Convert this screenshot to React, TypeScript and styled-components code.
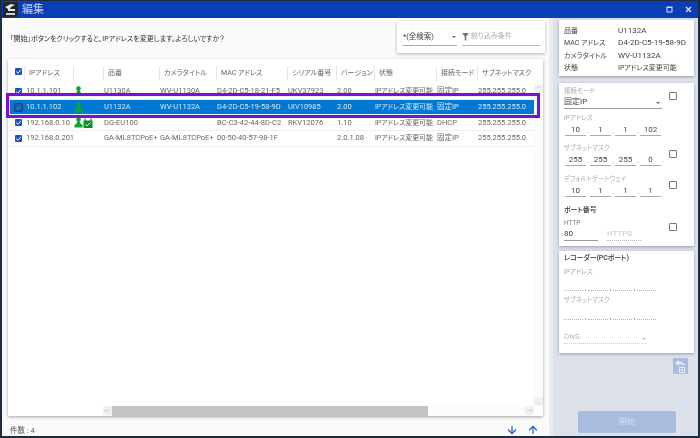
import React from "react";
import styled, { createGlobalStyle } from "styled-components";
import { ArrowDown, ArrowUp } from "lucide-react";

const Global = createGlobalStyle`
  html, body { margin: 0; padding: 0; width: 700px; height: 438px; overflow: hidden; background: #263446; }
  body { font-family: Roboto, "Noto Sans CJK JP", sans-serif; font-feature-settings: "palt" 1; }
  * { box-sizing: border-box; }
  #root { filter: blur(0.35px); }
`;

const Windowed = styled.div`
  position: relative; width: 700px; height: 438px; padding: 1px 2px 2px 2px;
  display: flex; flex-direction: column; background: #1d2c40;
`;
const TitleBar = styled.header`
  height: 17px; flex: none; background: #0a3eb6; display: flex; align-items: center; padding: 0 6px 0 1px;
`;
const TitleText = styled.span`
  font-size: 11px; color: #c4d2f0; margin-left: 4px; flex: 1; line-height: 17px;
`;
const WinButtons = styled.div`display: flex; align-items: center; gap: 12px;`;
const Body = styled.div`flex: 1; display: flex; min-height: 0; background: #fafafa;`;
const Main = styled.main`
  width: 547px; flex: none; display: flex; flex-direction: column; background: #fafafa; padding: 2px 4px 0 6px;
`;
const TopRow = styled.div`height: 39px; flex: none; display: flex; justify-content: space-between; align-items: flex-start;`;
const Message = styled.p`margin: 13px 0 0 2px; font-size: 7px; line-height: 12px; color: #333;`;
const SearchCard = styled.div`
  width: 148px; height: 32px; margin-top: 1px; background: #fff; box-shadow: 0 1px 3px rgba(0,0,0,.3);
  display: flex; gap: 5px; padding: 9px 5px 0 6px;
`;
const SearchSelect = styled.div`
  width: 54px; height: 16px; border-bottom: 1px solid #aaa; display: flex; justify-content: space-between;
  font-size: 7.5px; line-height: 14px; color: #444; padding-right: 1px;
`;
const Caret = styled.i<{ $light?: boolean }>`
  width: 0; height: 0; border: 2px solid transparent; border-top: 2.5px solid ${p => (p.$light ? "#bbb" : "#666")};
  border-bottom: 0; margin-top: 6px; display: block;
`;
const FilterField = styled.div`
  flex: 1; height: 16px; border-bottom: 1px solid #bbb; display: flex; gap: 2px; font-size: 7px; line-height: 13px; color: #aaa;
`;
const TableCard = styled.section`
  height: 357px; flex: none; background: #fff; box-shadow: 0 1px 3px rgba(0,0,0,.35); display: flex; flex-direction: column; width: 535px;
`;
const TableTop = styled.div`flex: 1; display: flex; min-height: 0;`;
const Table = styled.div`width: 526px; flex: none;`;
const COLS = "16px 49px 30px 56px 57px 71px 49px 38px 62px 41px 57px";
const HeadRow = styled.div`
  display: grid; grid-template-columns: ${COLS}; height: 25px; padding-top: 3px; align-items: center; font-size: 7px; color: #666;
`;
const HeadCell = styled.div`
  height: 15px; line-height: 14px; padding-left: 4px; border-left: 1px solid #e6e6e6; white-space: nowrap; overflow: hidden;
  &:first-child { border-left: 0; padding: 2px 0 0 7px; overflow: visible; }
`;
const Row = styled.div<{ $selected?: boolean }>`
  display: grid; grid-template-columns: ${COLS}; height: 15.7px; align-items: center; font-size: 7.5px;
  color: ${p => (p.$selected ? "#d4e8f8" : "#666")};
  background: ${p => (p.$selected ? "#0078d4" : "#fff")};
  border-bottom: 1px solid ${p => (p.$selected ? "#0078d4" : "#eee")};
`;
const Cell = styled.div`
  padding-left: 1px; white-space: nowrap; overflow: visible; line-height: 14px;
  &:first-child { padding-left: 7px; }
  &:nth-child(2) { padding-left: 2px; }
`;
const StateCell = styled(Cell)`font-size: 7px; letter-spacing: -0.1px;`;
const IconCell = styled.div`display: flex; padding-left: 1px; align-items: center; gap: 0;`;
const Check = styled.span<{ $selected?: boolean }>`
  display: flex; width: 7px; height: 7px; border-radius: 1px; background: ${p => (p.$selected ? "#0a5fb0" : "#1b54c0")};
  outline: ${p => (p.$selected ? "1px solid #123f66" : "none")}; align-items: center; justify-content: center;
`;
const VScroll = styled.div`
  width: 9px; flex: none; margin-top: 25px; background: #fbfbfb; display: flex; flex-direction: column; justify-content: space-between; align-items: center;
  font-size: 6px; color: #ccc;
`;
const ScrollEnd = styled.span`
  width: 9px; height: 9px; background: #f1f1f1; display: flex; align-items: center; justify-content: center; font-size: 6px; color: #c4c4c4;
`;
const HScroll = styled.div`height: 10px; flex: none; margin-left: 95px; width: 431px; background: #fbfbfb; display: flex;`;
const Thumb = styled.div`width: 316px; background: #c4c4c4;`;
const Spacer = styled.span`flex: 1;`;
const Footer = styled.footer`
  flex: 1; display: flex; align-items: center; justify-content: space-between; font-size: 7.5px; color: #555; padding: 7px 6px 0 2px;
`;
const Arrows = styled.div`display: flex; gap: 9px; color: #1c5fd0;`;
const Highlight = styled.div`
  position: absolute; left: 6px; top: 93px; width: 534px; height: 25px; border: 3px solid #7a0fd8; outline: 1px solid #e8f2fb; outline-offset: -4px; pointer-events: none;
`;
const Side = styled.aside`
  flex: 1; background: #dde1e9; border-left: 4px solid #e9ebee; display: flex; flex-direction: column; padding: 2px 4px 0 6px; align-items: stretch;
`;
const InfoCard = styled.div`
  background: #fff; box-shadow: 0 1px 3px rgba(0,0,0,.3); height: 56px; padding: 5px 0 0 5px; display: grid; grid-template-columns: 54px 1fr;
  grid-auto-rows: 12.4px; font-size: 8px; line-height: 12.4px; color: #444;
`;
const InfoJp = styled.span`font-size: 7px;`;
const Card = styled.div<{ $h: number; $top: number }>`
  background: #fff; box-shadow: 0 1px 3px rgba(0,0,0,.3); height: ${p => p.$h}px; margin-top: ${p => p.$top}px; padding: 0 0 0 5px; display: flex; flex-direction: column;
`;
const FieldRow = styled.div<{ $h: number; $pt?: number }>`
  height: ${p => p.$h}px; padding-top: ${p => p.$pt ?? 0}px; flex: none; display: flex; align-items: flex-start;
`;
const FieldMain = styled.div`width: 100px; flex: none;`;
const Small = styled.div<{ $mt?: number; $dark?: boolean }>`
  font-size: 6.5px; line-height: 9px; color: ${p => (p.$dark ? "#777" : "#aaa")}; white-space: nowrap; margin-top: ${p => p.$mt ?? 0}px;
`;
const SelectValue = styled.div`
  width: 98px; height: 13px; border-bottom: 1px solid #999; font-size: 8px; line-height: 11px; color: #444; display: flex; justify-content: space-between;
  padding-right: 2px;
`;
const Box = styled.span<{ $top: number }>`
  width: 8px; height: 8px; border: 1px solid #777; border-radius: 1px; margin-left: 5px; margin-top: ${p => p.$top}px; flex: none;
`;
const Octets = styled.div`display: flex; gap: 4px; padding-left: 1px; margin-top: 2px;`;
const Octet = styled.span<{ $dot?: boolean }>`
  width: 21px; height: 11px; text-align: center; font-size: 8px; line-height: 10px; color: #444; border-bottom: 1px solid #aaa; position: relative;
  ${p => p.$dot && `&::after { content: "."; position: absolute; right: -3.5px; top: 1px; color: #888; font-size: 7px; }`}
`;
const SectionTitle = styled.div<{ $mt?: number; $mb?: number }>`
  font-size: 7px; line-height: 12px; color: #333; font-weight: 500; white-space: nowrap; letter-spacing: -0.1px;
  margin-top: ${p => p.$mt ?? 0}px; margin-bottom: ${p => p.$mb ?? 0}px;
`;
const PortRow = styled.div`display: flex; gap: 9px; align-items: flex-end; margin-top: 1px;`;
const Port = styled.div<{ $off?: boolean }>`
  width: 34px; height: 12px; font-size: 8px; line-height: 10px; color: ${p => (p.$off ? "#c4c4c4" : "#444")};
  border-bottom: 1px ${p => (p.$off ? "dotted #bbb" : "solid #999")};
`;
const DottedRow = styled.div<{ $mt: number }>`
  width: 92px; margin-top: ${p => p.$mt}px; display: flex; gap: 2px; align-items: flex-end; height: 2px;
`;
const DotSegment = styled.span`flex: 1; border-bottom: 1px dotted #b4b4b4; height: 1px;`;
const DotMark = styled.span`width: 1px; height: 2px; background: #aaa;`;
const DnsRow = styled.div`
  width: 82px; height: 12px; margin-top: 12px; border-bottom: 1px dotted #ccc; font-size: 8px; line-height: 10px; color: #bbb; display: flex; justify-content: space-between;
`;
const ResetRow = styled.div`display: flex; justify-content: flex-end; padding: 5px 6px 0 0;`;
const ResetButton = styled.span`
  width: 15px; height: 16px; background: #a9bcdd; border-radius: 1px; display: flex; align-items: center; justify-content: center;
`;
const Start = styled.div`
  width: 98px; height: 22px; margin: 37px 0 0 19px; background: #a9bcdd; border-radius: 2px; color: #d3dcee; font-size: 8px; text-align: center; line-height: 22px;
`;

const CheckMark = ({ color = "#fff" }: { color?: string }) => (
  <svg width="7" height="7" viewBox="0 0 7 7"><path d="M1.2 3.6 L2.9 5.2 L5.9 1.8" fill="none" stroke={color} strokeWidth="1" /></svg>
);
const Person = () => (
  <svg width="9" height="11" viewBox="0 0 9 11">
    <circle cx="4.5" cy="2.6" r="2.3" fill="#0ca62c" />
    <path d="M3 4.6 L6 4.6 L6.4 6.6 L8.6 8 L8.6 10.5 L0.4 10.5 L0.4 8 L2.6 6.6 Z" fill="#0ca62c" />
  </svg>
);
const Device = () => (
  <svg width="10" height="10" viewBox="0 0 10 10">
    <rect x="0.5" y="2.5" width="9" height="7.5" fill="#118a2e" />
    <path d="M2 3 L2 0.5 M8 3 L8 0.5" stroke="#118a2e" strokeWidth="1.2" />
    <path d="M2.4 6.2 L4.2 7.8 L7.6 4.4" fill="none" stroke="#e8f5e8" strokeWidth="1" />
  </svg>
);

type RowData = { ip: string; icon: number; model: string; title: string; mac: string; serial: string; ver: string; mode: string; selected?: boolean };
const rows: RowData[] = [
  { ip: "10.1.1.101", icon: 1, model: "U1130A", title: "WV-U1130A", mac: "D4-2D-C5-18-21-F5", serial: "UKV37923", ver: "2.00", mode: "固定IP" },
  { ip: "10.1.1.102", icon: 1, model: "U1132A", title: "WV-U1132A", mac: "D4-2D-C5-19-58-9D", serial: "UIV10985", ver: "2.00", mode: "固定IP", selected: true },
  { ip: "192.168.0.10", icon: 2, model: "DG-EU100", title: "", mac: "BC-C3-42-44-8D-C2", serial: "RKV12076", ver: "1.10", mode: "DHCP" },
  { ip: "192.168.0.201", icon: 0, model: "GA-ML8TCPoE+", title: "GA-ML8TCPoE+", mac: "00-50-40-57-98-1F", serial: "", ver: "2.0.1.08", mode: "固定IP" },
];
const headers = ["IPアドレス", "", "品番", "カメラタイトル", "MAC アドレス", "シリアル番号", "バージョン", "状態", "接続モード", "サブネットマスク"];

const OctetGroup = ({ values }: { values: string[] }) => (
  <Octets>
    {values.map((v, i) => (
      <Octet key={i} $dot={i < 3}>{v}</Octet>
    ))}
  </Octets>
);
const EmptyAddress = ({ mt }: { mt: number }) => (
  <DottedRow $mt={mt}>
    <DotSegment /><DotMark /><DotSegment /><DotMark /><DotSegment /><DotMark /><DotSegment />
  </DottedRow>
);

export default function App() {
  return (
    <Windowed>
      <Global />
      <TitleBar>
        <svg width="15" height="15" viewBox="0 0 15 15">
          <rect width="15" height="15" fill="#20262c" />
          <path d="M2 5 L8 2 L12 3 L8 5 L7 7 L12 7 L12 9 L5 9 L5 7 Z" fill="#e6e6e6" />
          <path d="M3 11 L12 11 L12 13 L3 13 Z" fill="#cfcfcf" />
        </svg>
        <TitleText>編集</TitleText>
        <WinButtons>
          <svg width="7" height="7" viewBox="0 0 7 7"><rect x="1" y="1" width="5" height="5" fill="none" stroke="#d5def2" /><path d="M1 1.5H6" stroke="#d5def2" /></svg>
          <svg width="7" height="7" viewBox="0 0 7 7"><path d="M1 1L6 6M6 1L1 6" stroke="#e4eaf7" strokeWidth="1.2" /></svg>
        </WinButtons>
      </TitleBar>
      <Body>
        <Main>
          <TopRow>
            <Message>「開始」ボタンをクリックすると、IPアドレスを変更します。よろしいですか？</Message>
            <SearchCard>
              <SearchSelect>*(全検索)<Caret /></SearchSelect>
              <FilterField>
                <svg width="7" height="8" viewBox="0 0 7 8" style={{ marginTop: 3, flex: "none" }}><path d="M0 0H7L4.3 3.4V8L2.7 7V3.4Z" fill="#777" /></svg>
                絞り込み条件
              </FilterField>
            </SearchCard>
          </TopRow>
          <TableCard>
            <TableTop>
              <Table>
                <HeadRow>
                  <HeadCell><Check><CheckMark /></Check></HeadCell>
                  {headers.map((h, i) => <HeadCell key={i}>{h}</HeadCell>)}
                </HeadRow>
                {rows.map(r => (
                  <Row key={r.ip} $selected={r.selected}>
                    <Cell><Check $selected={r.selected}><CheckMark color={r.selected ? "#3f8fd6" : "#fff"} /></Check></Cell>
                    <Cell>{r.ip}</Cell>
                    <IconCell>
                      {r.icon > 0 && <Person />}
                      {r.icon > 1 && <Device />}
                    </IconCell>
                    <Cell>{r.model}</Cell>
                    <Cell>{r.title}</Cell>
                    <Cell>{r.mac}</Cell>
                    <Cell>{r.serial}</Cell>
                    <Cell>{r.ver}</Cell>
                    <StateCell>IPアドレス変更可能</StateCell>
                    <Cell>{r.mode}</Cell>
                    <Cell>255.255.255.0</Cell>
                  </Row>
                ))}
              </Table>
              <VScroll>
                <ScrollEnd>⌃</ScrollEnd>
                <ScrollEnd>⌄</ScrollEnd>
              </VScroll>
            </TableTop>
            <HScroll>
              <ScrollEnd>←</ScrollEnd>
              <Thumb />
              <Spacer />
              <ScrollEnd>→</ScrollEnd>
            </HScroll>
          </TableCard>
          <Footer>
            <span>件数 : 4</span>
            <Arrows>
              <ArrowDown size={12} strokeWidth={2.4} />
              <ArrowUp size={12} strokeWidth={2.4} />
            </Arrows>
          </Footer>
        </Main>
        <Side>
          <InfoCard>
            <InfoJp>品番</InfoJp><span>U1132A</span>
            <InfoJp>MAC アドレス</InfoJp><span>D4-2D-C5-19-58-9D</span>
            <InfoJp>カメラタイトル</InfoJp><span>WV-U1132A</span>
            <InfoJp>状態</InfoJp><InfoJp>IPアドレス変更可能</InfoJp>
          </InfoCard>
          <Card $h={163} $top={7}>
            <FieldRow $h={31} $pt={3}>
              <FieldMain>
                <Small $mt={1}>接続モード</Small>
                <SelectValue>固定IP<Caret /></SelectValue>
              </FieldMain>
              <Box $top={6} />
            </FieldRow>
            <FieldRow $h={30}>
              <FieldMain><Small>IPアドレス</Small><OctetGroup values={["10", "1", "1", "102"]} /></FieldMain>
            </FieldRow>
            <FieldRow $h={31}>
              <FieldMain><Small>サブネットマスク</Small><OctetGroup values={["255", "255", "255", "0"]} /></FieldMain>
              <Box $top={6} />
            </FieldRow>
            <FieldRow $h={27}>
              <FieldMain><Small>デフォルトゲートウェイ</Small><OctetGroup values={["10", "1", "1", "1"]} /></FieldMain>
              <Box $top={6} />
            </FieldRow>
            <SectionTitle $mt={2} $mb={3}>ポート番号</SectionTitle>
            <FieldRow $h={26}>
              <FieldMain>
                <Small $dark>HTTP</Small>
                <PortRow><Port>80</Port><Port $off>HTTPS</Port></PortRow>
              </FieldMain>
              <Box $top={4} />
            </FieldRow>
          </Card>
          <Card $h={102} $top={5}>
            <SectionTitle $mt={1}>レコーダー(PCポート)</SectionTitle>
            <Small $mt={4}>IPアドレス</Small>
            <EmptyAddress mt={12} />
            <Small $mt={5}>サブネットマスク</Small>
            <EmptyAddress mt={13} />
            <DnsRow>DNS<Caret $light /></DnsRow>
          </Card>
          <ResetRow>
            <ResetButton>
              <svg width="13" height="14" viewBox="0 0 13 14">
                <path d="M1 4 L4.5 1 L4.5 2.8 C8 2.8 10.5 4 11 7 C9.5 5.5 7.5 5.2 4.5 5.2 L4.5 7 Z" fill="#e8eef8" />
                <rect x="5.5" y="8.5" width="5" height="5" fill="none" stroke="#e8eef8" />
                <rect x="7" y="10" width="2" height="2" fill="#e8eef8" />
              </svg>
            </ResetButton>
          </ResetRow>
          <Start>開始</Start>
        </Side>
      </Body>
      <Highlight />
    </Windowed>
  );
}
